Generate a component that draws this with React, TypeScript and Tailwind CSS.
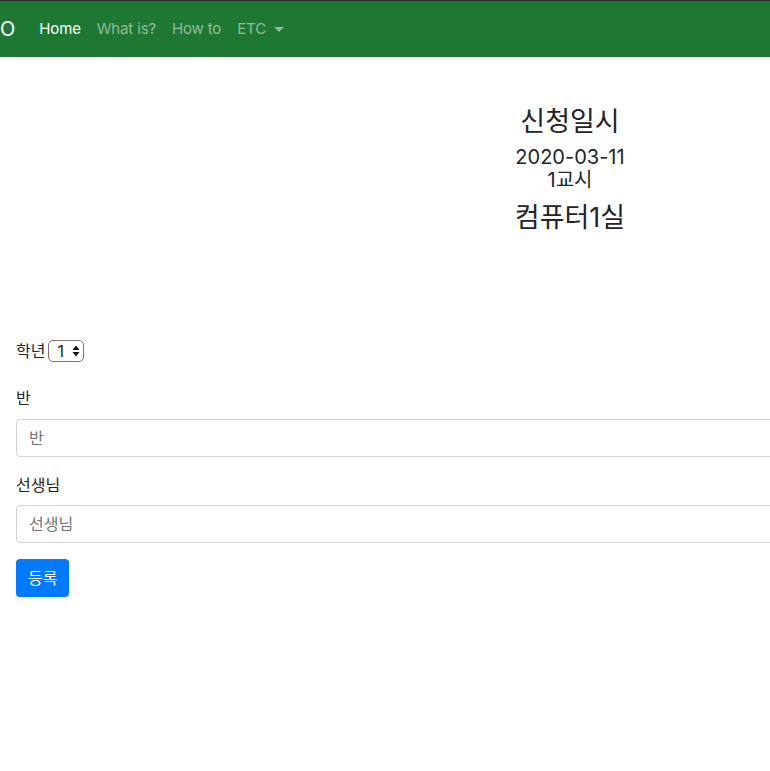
import { useState } from 'react';

const font = { fontFamily: 'Inter, "Noto Sans CJK KR", "Noto Sans", sans-serif' };

export default function App() {
    const [grade, setGrade] = useState(1);
    const [ban, setBan] = useState('');
    const [teacher, setTeacher] = useState('');

    return (
        <div className="w-[770px] h-[771px] overflow-hidden bg-white text-[#212529]" style={font}>
            <div className="w-[1140px]">
                <nav className="h-[57px] flex items-center bg-[#1e7834] border-t border-[#2a2a2a]">
                    <span className="text-[20px] text-white mr-[16px] leading-none">O</span>
                    <a className="px-2 text-[15px] tracking-[-0.01em] text-white">Home</a>
                    <a className="px-2 text-[15px] tracking-[-0.01em] text-white/50">What is?</a>
                    <a className="px-2 text-[15px] tracking-[-0.01em] text-white/50">How to</a>
                    <a className="px-2 text-[15px] tracking-[-0.01em] text-white/50 flex items-center">
                        ETC
                        <span className="ml-[8px] w-0 h-0 border-l-[5px] border-r-[5px] border-t-[5px] border-l-transparent border-r-transparent border-t-white/50" />
                    </a>
                </nav>

                <div className="flex flex-col items-center pt-[49px]">
                    <h4 className="text-[27px] leading-[32px]">신청일시</h4>
                    <h5 className="text-[20px] leading-[23px] mt-[8px] text-center">
                        2020-03-11
                        <br />
                        1교시
                    </h5>
                    <h4 className="text-[27px] leading-[32px] mt-[10px]">컴퓨터1실</h4>
                </div>

                <form className="px-4 pt-[105px]" onSubmit={e => e.preventDefault()}>
                    <div className="flex items-center mb-[23px] text-[16px] leading-6">
                        <label className="mr-[3px]">학년</label>
                        <div
                            className="h-[22px] w-[36px] border border-[#777] rounded-[5px] flex items-center justify-between pl-[8px] pr-[3px] cursor-pointer select-none"
                            onClick={() => setGrade(grade === 3 ? 1 : grade + 1)}
                        >
                            <span className="text-[16px]">{grade}</span>
                            <svg width="8" height="12" viewBox="0 0 8 12">
                                <path d="M4 0.5 L7.5 5 L0.5 5 Z" fill="#111" />
                                <path d="M4 11.5 L7.5 7 L0.5 7 Z" fill="#111" />
                            </svg>
                        </div>
                    </div>

                    <div className="mb-[16px]">
                        <label className="block text-[16px] leading-6 mb-[9px]">반</label>
                        <input
                            value={ban}
                            onChange={e => setBan(e.target.value)}
                            placeholder="반"
                            className="block w-full h-[38px] px-3 text-[16px] border border-[#ced4da] rounded-[4px] placeholder:text-[#6c757d] outline-none"
                        />
                    </div>

                    <div className="mb-[16px]">
                        <label className="block text-[16px] leading-6 mb-[8px]">선생님</label>
                        <input
                            value={teacher}
                            onChange={e => setTeacher(e.target.value)}
                            placeholder="선생님"
                            className="block w-full h-[38px] px-3 text-[16px] border border-[#ced4da] rounded-[4px] placeholder:text-[#6c757d] outline-none"
                        />
                    </div>

                    <button type="submit" className="h-[38px] px-3 bg-[#007bff] text-white text-[16px] rounded-[4px]">
                        등록
                    </button>
                </form>
            </div>
        </div>
    );
}
